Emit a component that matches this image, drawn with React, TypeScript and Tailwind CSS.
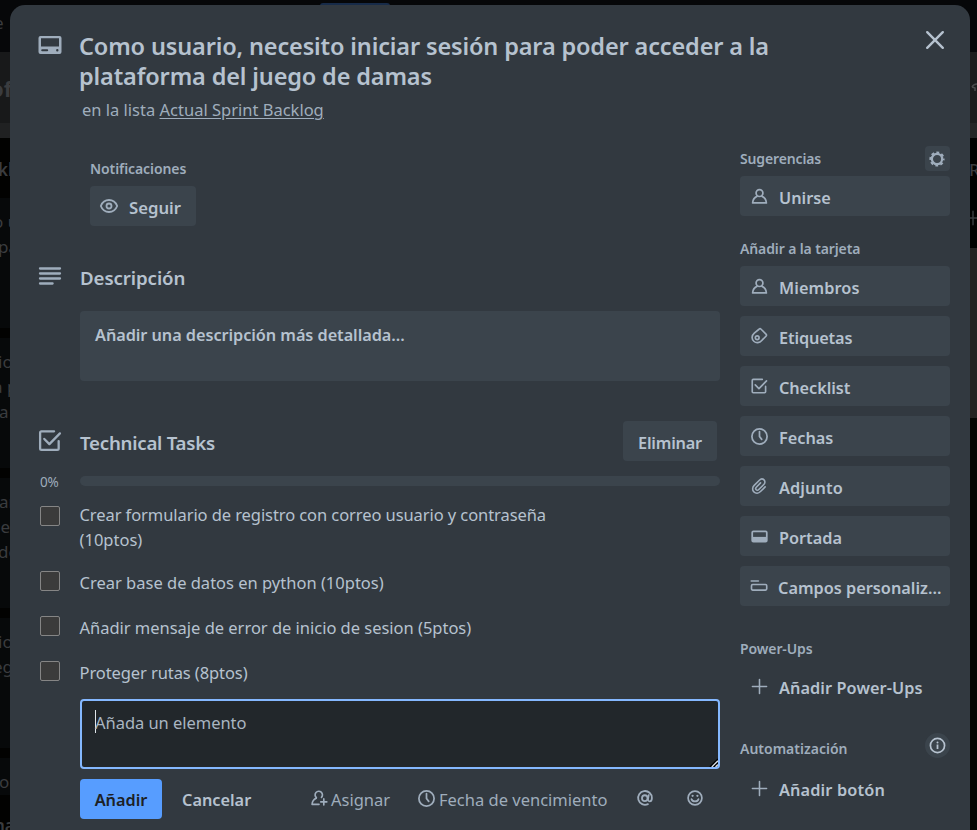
import type { ReactNode } from 'react';

type IconProps = { className?: string };

function Svg({ className = '', box = 24, children }: { className?: string; box?: number; children: ReactNode }) {
  return (
    <svg viewBox={`0 0 ${box} ${box}`} fill="none" className={`shrink-0 ${className}`} aria-hidden="true">
      {children}
    </svg>
  );
}

const CardIcon = ({ className }: IconProps) => (
  <Svg className={className}>
    <path
      fill="currentColor"
      fillRule="evenodd"
      clipRule="evenodd"
      d="M2.500 3h19a2 2 0 0 1 2 2v14a2 2 0 0 1-2 2h-19a2 2 0 0 1-2-2V5a2 2 0 0 1 2-2ZM3 5.200v8.200h18V5.200H3ZM4.200 16.300a1 1 0 0 0 0 2h5a1 1 0 0 0 0-2h-5ZM19.300 16.100a1.200 1.200 0 1 0 0 2.400 1.200 1.200 0 0 0 0-2.400Z"
    />
  </Svg>
);

const LinesIcon = ({ className }: IconProps) => (
  <Svg className={className}>
    <path d="M2 4.500h20M2 9.500h20M2 14.500h20M2 19.500h12.600" stroke="currentColor" strokeWidth="2.300" strokeLinecap="round" />
  </Svg>
);

const CheckIcon = ({ className }: IconProps) => (
  <Svg className={className}>
    <path
      d="M16.400 3.200H4.300A1.300 1.300 0 0 0 3 4.500v15.200A1.300 1.300 0 0 0 4.300 21h15.200a1.300 1.300 0 0 0 1.300-1.300v-7.200"
      stroke="currentColor"
      strokeWidth="2.200"
      strokeLinecap="round"
    />
    <path d="m7 10.500 4.900 5L22 5.200" stroke="currentColor" strokeWidth="2.200" strokeLinecap="round" strokeLinejoin="round" />
  </Svg>
);

const EyeIcon = ({ className }: IconProps) => (
  <Svg className={className}>
    <path
      d="M2.200 12C4 7.400 7.700 4.800 12 4.800s8 2.600 9.800 7.200c-1.800 4.600-5.500 7.200-9.800 7.200S4 16.600 2.200 12Z"
      stroke="currentColor"
      strokeWidth="2.200"
      strokeLinejoin="round"
    />
    <circle cx="12" cy="12" r="3" stroke="currentColor" strokeWidth="2.200" />
  </Svg>
);

const PersonIcon = ({ className }: IconProps) => (
  <Svg className={className}>
    <path
      d="M8.700 11.800C5.700 13 3.600 15.900 3.300 20.200h17.400c-.3-4.300-2.400-7.200-5.400-8.400"
      stroke="currentColor"
      strokeWidth="2.200"
      strokeLinejoin="round"
      strokeLinecap="round"
    />
    <circle cx="12" cy="7.700" r="4.300" stroke="currentColor" strokeWidth="2.200" />
  </Svg>
);

const PersonAddIcon = ({ className }: IconProps) => (
  <Svg className={className}>
    <path
      d="M12 20.500H2.800c.2-4.200 2.400-6.900 5.500-8.200"
      stroke="currentColor"
      strokeWidth="2.200"
      strokeLinecap="round"
      strokeLinejoin="round"
    />
    <path d="M8.500 11.600a4.900 4.900 0 1 1 6.800-.4" stroke="currentColor" strokeWidth="2.200" strokeLinecap="round" />
    <path d="M18.400 13.200v8M14.400 17.200h8" stroke="currentColor" strokeWidth="2.200" strokeLinecap="round" />
  </Svg>
);

const TagIcon = ({ className }: IconProps) => (
  <Svg className={className}>
    <path
      d="M12 3a2 2 0 0 1 2.800 0l6.500 6.500a2 2 0 0 1 0 2.800l-5.200 5.300c-3.600 4-7.900 4.300-11 1.400-3.300-3.200-3-7.600.6-10.800L12 3Z"
      stroke="currentColor"
      strokeWidth="2.200"
      strokeLinejoin="round"
    />
    <circle cx="9.600" cy="14.300" r="2.500" stroke="currentColor" strokeWidth="2.200" />
  </Svg>
);

const ClockIcon = ({ className }: IconProps) => (
  <Svg className={className}>
    <circle cx="12" cy="12" r="9.600" stroke="currentColor" strokeWidth="2.200" />
    <path d="M12 5.800V12l2.800 3.600" stroke="currentColor" strokeWidth="2.200" strokeLinecap="round" strokeLinejoin="round" />
  </Svg>
);

const ClipIcon = ({ className }: IconProps) => (
  <Svg className={className}>
    <path
      d="m20.200 13.200-6.200 6.200c-2.700 2.700-6.400 2.800-8.800.5-2.400-2.400-2.200-6.100.4-8.700l6.900-6.900c1.900-1.900 4.600-2 6.200-.4 1.700 1.700 1.500 4.300-.3 6.100l-6.700 6.700c-1.200 1.200-2.600 1.200-3.500.3s-.9-2.300.2-3.400l5.700-5.700"
      stroke="currentColor"
      strokeWidth="2.100"
      strokeLinecap="round"
    />
  </Svg>
);

const CoverIcon = ({ className }: IconProps) => (
  <Svg className={className}>
    <rect x="2.800" y="5.400" width="18.400" height="13.200" rx="1.500" stroke="currentColor" strokeWidth="2.200" />
    <path d="M2.800 12.500h18.400v6H2.800z" fill="currentColor" />
  </Svg>
);

const FieldsIcon = ({ className }: IconProps) => (
  <Svg className={className}>
    <path d="M1.700 5.300h9.500" stroke="currentColor" strokeWidth="2.200" strokeLinecap="round" />
    <rect x="2" y="10" width="20.300" height="7.400" rx="1.600" stroke="currentColor" strokeWidth="2.200" />
  </Svg>
);

const PlusIcon = ({ className }: IconProps) => (
  <Svg className={className}>
    <path d="M12 2v20M2 12h20" stroke="currentColor" strokeWidth="2.200" strokeLinecap="round" />
  </Svg>
);

const GearIcon = ({ className }: IconProps) => (
  <Svg className={className}>
    <circle cx="12" cy="12" r="7.700" stroke="currentColor" strokeWidth="3.400" />
    <circle
      cx="12"
      cy="12"
      r="9.800"
      stroke="currentColor"
      strokeWidth="3.200"
      strokeDasharray="4.200 3.497"
      strokeDashoffset="2.100"
    />
  </Svg>
);

const InfoIcon = ({ className }: IconProps) => (
  <Svg className={className}>
    <circle cx="12" cy="12" r="10" stroke="currentColor" strokeWidth="2.400" />
    <circle cx="12" cy="7.800" r="1.400" fill="currentColor" />
    <path d="M12 10.600v6.400" stroke="currentColor" strokeWidth="2.500" />
  </Svg>
);

const AtIcon = ({ className }: IconProps) => (
  <Svg className={className}>
    <path
      d="M15.900 20.200A9.200 9.200 0 1 1 21.200 12c0 2.900-1.200 4.400-2.900 4.400-1.900 0-2.500-1.300-2.200-3.200l.8-4.900"
      stroke="currentColor"
      strokeWidth="2.400"
      strokeLinecap="round"
    />
    <ellipse cx="11.700" cy="12.200" rx="3.700" ry="3.900" stroke="currentColor" strokeWidth="2.400" />
  </Svg>
);

const SmileIcon = ({ className }: IconProps) => (
  <Svg className={className}>
    <circle cx="12" cy="12" r="9.200" stroke="currentColor" strokeWidth="2.300" />
    <path d="M7.300 13.500a4.900 4.300 0 0 0 9.400 0" stroke="currentColor" strokeWidth="2.300" strokeLinecap="round" />
    <circle cx="8.800" cy="9" r="1.500" fill="currentColor" />
    <circle cx="15.200" cy="9" r="1.500" fill="currentColor" />
  </Svg>
);

const CloseIcon = ({ className }: IconProps) => (
  <Svg className={className}>
    <path d="m4.200 4.200 15.600 15.600M19.800 4.200 4.200 19.800" stroke="currentColor" strokeWidth="2.400" strokeLinecap="round" />
  </Svg>
);

function Board() {
  return (
    <div className="flex h-full justify-between text-[17px] leading-[25px] text-[#3a3c3f]">
      <div className="flex w-[30px] flex-col whitespace-nowrap">
        <div className="h-[52px] bg-[#060709] pt-[10px]">
          <span className="-ml-[6px]">e</span>
        </div>
        <div className="h-[71px] bg-[#18191a] pt-[24px] text-[22px] font-bold">
          <span className="-ml-[10px]">of</span>
        </div>
        <div className="h-[15px] bg-[#202122]" />
        <div className="h-[60px] bg-[#020201] pt-[19px] font-semibold">
          <span className="-ml-[2px]">kl</span>
        </div>
        <div className="h-[130px] bg-[#07090a] pt-[11px]">
          <div className="-ml-[7px]">o u</div>
          <div className="-ml-[2px]">pa</div>
        </div>
        <div className="h-[10px] bg-[#020201]" />
        <div className="h-[130px] bg-[#07090a] pt-[11px]">
          <div className="-ml-[2px]">io</div>
          <div className="-ml-[7px]">a p</div>
          <div className="-ml-[1px]">a</div>
        </div>
        <div className="h-[10px] bg-[#020201]" />
        <div className="h-[130px] bg-[#07090a] pt-[11px]">
          <div className="-ml-[1px]">ar</div>
          <div className="-ml-[4px]">ie</div>
          <div className="-ml-[2px]">de</div>
        </div>
        <div className="h-[10px] bg-[#020201]" />
        <div className="h-[130px] bg-[#07090a] pt-[11px]">
          <div className="-ml-[2px]">io</div>
          <div className="-ml-[7px]">eg</div>
        </div>
        <div className="h-[10px] bg-[#020201]" />
        <div className="h-[37px] bg-[#07090a] pt-[11px]">
          <div className="-ml-[1px]">o</div>
        </div>
        <div className="h-[35px] bg-[#020201] pt-[18px] font-semibold">
          <div className="-ml-[6px]">na</div>
        </div>
      </div>
      <div className="h-[10px] grow bg-[#060709] pl-[290px] pt-[3px]">
        <div className="h-[6px] w-[70px] rounded-t-[3px] bg-[#172b49]" />
      </div>
      <div className="flex w-[30px] flex-col">
        <div className="h-[52px] bg-[#060709]" />
        <div className="flex h-[71px] items-center bg-[#1c1d1d] pl-[24px]">
          <svg viewBox="0 0 12 12" className="size-[12px] shrink-0" fill="none">
            <path d="M1 5c1-2 3-3 6-3M1 5l3 1v3" stroke="#4a4b4c" strokeWidth="1.500" />
          </svg>
        </div>
        <div className="h-[15px] bg-[#252626]" />
        <div className="h-[110px] bg-[#020201] pl-[22px] pt-[19px] font-medium">
          R
          <PlusIcon className="-ml-[4px] mt-[28px] size-[16px]" />
        </div>
        <div className="h-[170px] bg-[#252322]" />
        <div className="grow bg-[#050603]" />
      </div>
    </div>
  );
}

function SideButton({ icon, label, tracking = '' }: { icon: ReactNode; label: string; tracking?: string }) {
  return (
    <button className="flex h-[40px] w-full items-center rounded-[4px] bg-[#3b444c] pl-[10px] text-left">
      <span className="flex w-[29px] text-[#9fadbc]">{icon}</span>
      <span className={`whitespace-nowrap pt-[4px] ${tracking}`}>{label}</span>
    </button>
  );
}

function Checkbox() {
  return <span className="size-[20px] shrink-0 rounded-[2px] border-[1.5px] border-[#858585] bg-[#3b3b3b]" />;
}

const actions: [string, ReactNode, string][] = [
  ['Miembros', <PersonIcon className="size-[19px]" />, 'tracking-[0.08px]'],
  ['Etiquetas', <TagIcon className="size-[18px]" />, 'tracking-[-0.14px]'],
  ['Checklist', <CheckIcon className="size-[18px]" />, 'tracking-[-0.08px]'],
  ['Fechas', <ClockIcon className="size-[19px]" />, ''],
  ['Adjunto', <ClipIcon className="size-[18px]" />, 'tracking-[0.1px]'],
  ['Portada', <CoverIcon className="size-[19px]" />, ''],
];

export default function App() {
  return (
    <div className="relative h-[830px] w-[977px] overflow-hidden bg-black font-['Noto_Sans','Open_Sans',sans-serif]">
      <Board />
      <main className="absolute left-[10px] top-[5px] flex h-[840px] w-[960px] rounded-[15px] bg-[#323940] text-[16.5px] leading-[25px] text-[#b6c2cf]">
        <section className="w-[710px] shrink-0 pl-[27px]">
          <header className="flex pt-[26px]">
            <CardIcon className="ml-px mt-[2px] size-[24px] text-[#9fadbc]" />
            <div className="pl-[17px]">
              <h1 className="whitespace-nowrap text-[23.5px] font-semibold leading-[30px] tracking-[-0.145px]">
                Como usuario, necesito iniciar sesión para poder acceder a la
                <br />
                plataforma del juego de damas
              </h1>
              <p className="mt-[6px] pl-[3px] text-[#9fadbc]">
                en la lista <a className="underline underline-offset-[2px]">Actual Sprint Backlog</a>
              </p>
            </div>
          </header>

          <div className="mt-[34px] pl-[53px]">
            <h3 className="h-[30px] text-[14px] font-semibold tracking-[-0.08px] text-[#9fadbc]">Notificaciones</h3>
            <button className="flex h-[40px] w-[106px] items-center rounded-[4px] bg-[#3b444c] pl-[9px]">
              <EyeIcon className="size-[20px] text-[#9fadbc]" />
              <span className="pl-[10px] pt-[3px] text-[16.7px] font-semibold">Seguir</span>
            </button>
          </div>

          <div className="mt-[39px] flex items-center">
            <LinesIcon className="-mt-[3px] ml-px size-[24px] text-[#9fadbc]" />
            <h2 className="pl-[18px] text-[18.7px] font-semibold tracking-[-0.1px]">Descripción</h2>
          </div>
          <div className="ml-[43px] mt-[21px] h-[70px] w-[640px] rounded-[4px] bg-[#3b444c] pl-[15px] pt-[12px] text-[16.3px] font-semibold tracking-[-0.06px]">
            Añadir una descripción más detallada...
          </div>

          <div className="mt-[40px] flex h-[40px] items-center">
            <CheckIcon className="-mt-px size-[25px] text-[#9fadbc]" />
            <h2 className="grow pl-[18px] pt-[2px] text-[18.7px] font-semibold tracking-[-0.25px]">Technical Tasks</h2>
            <button className="mr-[3px] h-[40px] w-[94px] rounded-[4px] bg-[#3b444c] pt-[4px] text-[16.3px] font-semibold tracking-[-0.2px]">
              Eliminar
            </button>
          </div>
          <div className="mt-[15px] flex h-[10px] items-center pl-[3px]">
            <span className="w-[40px] pt-[2px] text-[13.500px] tracking-[-0.2px] text-[#9fadbc]">0%</span>
            <div className="h-[10px] w-[640px] rounded-full bg-[#3b444c]" />
          </div>

          <ul className="mt-[20px] pl-[3px]">
            <li className="flex h-[65px] gap-[19.5px]">
              <Checkbox />
              <span className="-mt-[4px]">
                <span className="tracking-[-0.08px]">Crear formulario de registro con correo usuario y contraseña</span>
                <br />
                (10ptos)
              </span>
            </li>
            <li className="flex h-[45px] gap-[19.5px]">
              <Checkbox />
              <span className="-mt-[1px]">Crear base de datos en python (10ptos)</span>
            </li>
            <li className="flex h-[45px] gap-[19.5px]">
              <Checkbox />
              <span className="-mt-[1px] tracking-[-0.02px]">Añadir mensaje de error de inicio de sesion (5ptos)</span>
            </li>
            <li className="flex h-[38px] gap-[19.5px]">
              <Checkbox />
              <span className="-mt-[1px] tracking-[-0.09px]">Proteger rutas (8ptos)</span>
            </li>
          </ul>

          <div className="ml-[43px] flex h-[70px] w-[640px] items-end justify-between rounded-[4px] border-[2px] border-[#85b8ff] bg-[#22272b]">
            <div className="flex h-full pl-[13px] pt-[9px]">
              <span className="h-[23px] w-px bg-[#dfe5ea]" />
              <span className="-ml-px tracking-[-0.04px] text-[#a9b5c1]">Añada un elemento</span>
            </div>
            <svg viewBox="0 0 9 9" className="size-[9px]" fill="none">
              <path d="M1 9 9 1" stroke="#000" strokeWidth="1.600" />
              <path d="M2.800 9 9 2.800" stroke="#d8dde2" strokeWidth="1.400" />
              <path d="M4.800 9 9 4.800" stroke="#000" strokeWidth="1.200" />
              <path d="M6.600 9 9 6.600" stroke="#d8dde2" strokeWidth="1.400" />
            </svg>
          </div>

          <div className="mt-[10px] flex h-[40px] items-center pl-[43px]">
            <button className="h-[40px] w-[82px] rounded-[4px] bg-[#579dff] pt-[2px] text-[16.3px] font-semibold text-[#1d2125]">
              Añadir
            </button>
            <button className="ml-[20px] w-[69px] pt-[2px] text-left text-[16.3px] font-semibold">Cancelar</button>
            <div className="ml-[59px] flex w-[107px] items-center text-[#9fadbc]">
              <PersonAddIcon className="-mt-[2px] size-[18px]" />
              <span className="pl-[3px]">Asignar</span>
            </div>
            <div className="flex w-[219px] items-center text-[#9fadbc]">
              <ClockIcon className="-mt-[2px] size-[19px]" />
              <span className="pl-[3px]">Fecha de vencimiento</span>
            </div>
            <AtIcon className="-mt-[2px] size-[18px] text-[#9fadbc]" />
            <SmileIcon className="-mt-[2px] ml-[32px] size-[18px] text-[#9fadbc]" />
          </div>
        </section>

        <aside className="ml-[20px] w-[210px] shrink-0 text-[16.3px] font-semibold">
          <div className="flex h-[60px] justify-end pt-[23px]">
            <CloseIcon className="mr-[3px] size-[24px]" />
          </div>
          <div className="mt-[81px] flex h-[30px] justify-between text-[14px] text-[#9fadbc]">
            <h3 className="tracking-[-0.14px]">Sugerencias</h3>
            <span className="flex size-[25px] items-center justify-center rounded-[4px] bg-[#3b444c] pr-px">
              <GearIcon className="size-[16px]" />
            </span>
          </div>
          <SideButton icon={<PersonIcon className="size-[19px]" />} label="Unirse" />

          <h3 className="mt-[20px] h-[30px] text-[14px] tracking-[-0.12px] text-[#9fadbc]">Añadir a la tarjeta</h3>
          <div className="flex flex-col gap-[10px]">
            {actions.map(([label, icon, tracking]) => (
              <SideButton key={label} icon={icon} label={label} tracking={tracking} />
            ))}
            <button className="flex h-[40px] w-full items-center rounded-[4px] bg-[#3b444c] pl-[10px] text-left">
              <FieldsIcon className="size-[18px] text-[#9fadbc]" />
              <span className="whitespace-nowrap pl-[10px] pt-[4px]">Campos personaliz...</span>
            </button>
          </div>

          <h3 className="mt-[30px] h-[30px] text-[14px] tracking-[-0.1px] text-[#9fadbc]">Power-Ups</h3>
          <div className="flex h-[40px] items-center pl-[11px]">
            <PlusIcon className="size-[17px] text-[#9fadbc]" />
            <span className="pl-[11px] pt-[4px] tracking-[0.08px]">Añadir Power-Ups</span>
          </div>

          <div className="mt-[27px] flex h-[35px] justify-between text-[14px] text-[#9fadbc]">
            <h3 className="pt-[3px]">Automatización</h3>
            <span className="flex size-[25px] items-center justify-center rounded-full bg-[#3b444c] text-[#b6c2cf]">
              <InfoIcon className="size-[17px]" />
            </span>
          </div>
          <div className="flex h-[40px] items-center pl-[11px]">
            <PlusIcon className="size-[17px] text-[#9fadbc]" />
            <span className="pl-[11px] pt-[4px] tracking-[0.14px]">Añadir botón</span>
          </div>
        </aside>
      </main>
    </div>
  );
}
